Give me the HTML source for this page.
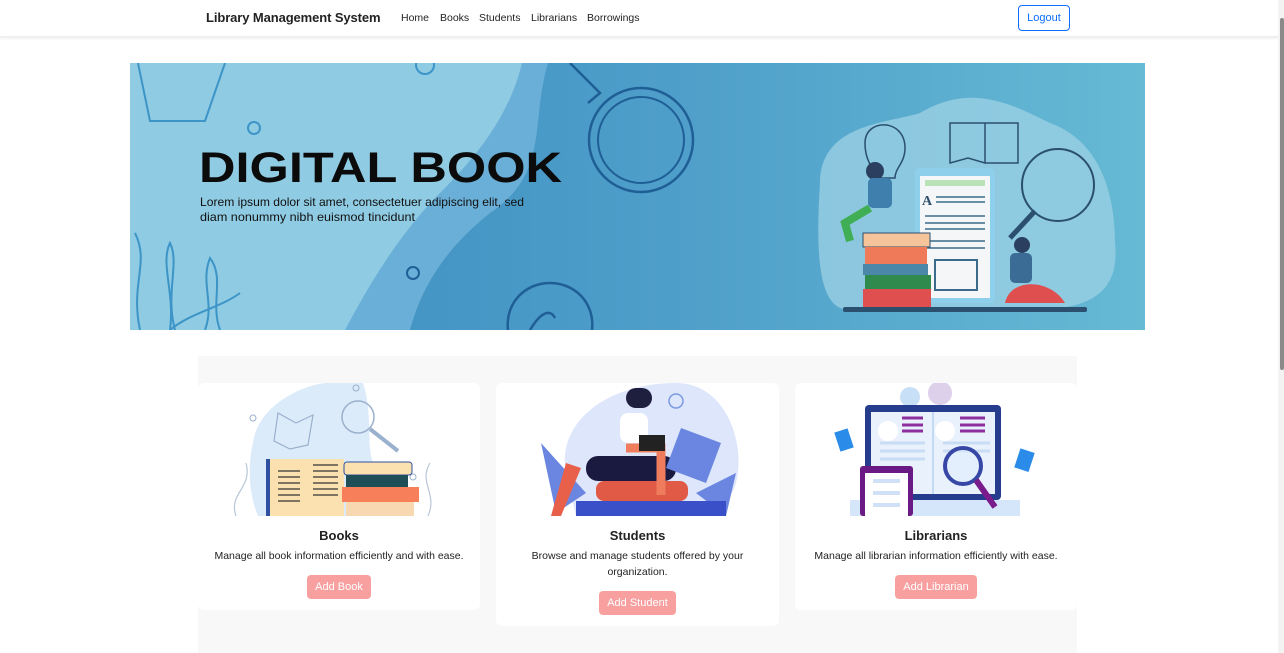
<!DOCTYPE html>
<html><head><meta charset="utf-8"><style>
*{box-sizing:border-box;margin:0;padding:0}
html,body{width:1284px;height:653px;overflow:hidden;background:#fff;font-family:"Liberation Sans",sans-serif;color:#212529}
.nav{position:absolute;left:0;top:0;width:1278px;height:37px;background:#fff;box-shadow:0 1px 3px rgba(0,0,0,.1);border-bottom:1px solid #eee}
.brand{position:absolute;left:206px;top:10px;font-size:13px;font-weight:bold;color:#222;letter-spacing:-.1px}
.links{position:absolute;left:401px;top:12px;font-size:10.5px;color:#222}
.links span{position:absolute;white-space:nowrap}
.logout{position:absolute;left:1018px;top:5px;width:52px;height:26px;border:1px solid #0d6efd;border-radius:4px;color:#0d6efd;font-size:11px;text-align:center;line-height:24px}
.sb{position:absolute;left:1278px;top:0;width:6px;height:653px;background:#f3f3f3}
.thumb{position:absolute;left:1280px;top:18px;width:4px;height:352px;background:#8a8a8a;border-radius:2px}
.banner{position:absolute;left:130px;top:63px;width:1015px;height:267px;overflow:hidden}
.sec{position:absolute;left:198px;top:356px;width:879px;height:297px;background:#f8f8f8}
.card{position:absolute;top:383px;background:#fff;border-radius:6px;text-align:center}
.card svg{display:block}
.card h5{font-size:13px;font-weight:bold;margin-top:12px;color:#222}
.card p{font-size:10.5px;line-height:16px;margin-top:5px;color:#222;padding:0 30px}
.btn{display:inline-block;margin-top:11px;height:24px;line-height:24px;padding:0 8px;background:#f8a0a0;color:#fff;font-size:11px;border-radius:4px}
</style></head><body>
<div class="nav"><div class="brand">Library Management System</div>
<div class="links"><span style="left:0">Home</span><span style="left:39px">Books</span><span style="left:78px">Students</span><span style="left:130px">Librarians</span><span style="left:186px">Borrowings</span></div>
<div class="logout">Logout</div></div>
<div class="sb"></div><div class="thumb"></div>

<div class="banner"><svg width="1015" height="267" viewBox="0 0 1015 267">
<defs><linearGradient id="g" x1="0" x2="1"><stop offset="0" stop-color="#3a8bbf"/><stop offset=".55" stop-color="#4f9fca"/><stop offset="1" stop-color="#66bad4"/></linearGradient></defs>
<rect width="1015" height="267" fill="url(#g)"/>
<path d="M0 0H418C400 60 420 110 360 150 310 190 290 230 280 267H0Z" fill="#6aafd7"/>
<path d="M0 0H392C380 50 350 90 310 130 270 170 240 220 215 267H0Z" fill="#8fcbe3"/>
<path d="M8 0 20 58H75L95 0" fill="none" stroke="#3d95c7" stroke-width="2"/>
<circle cx="124" cy="65" r="6" fill="none" stroke="#3d95c7" stroke-width="2"/>
<circle cx="295" cy="2" r="9" fill="none" stroke="#3d95c7" stroke-width="2"/>
<path d="M10 267C0 220 20 200 5 170M40 267C45 230 30 200 40 180 50 200 35 230 45 267M75 267C85 240 70 220 80 195 95 215 80 240 90 267M40 267C60 250 90 245 110 230" fill="none" stroke="#3d95c7" stroke-width="2"/>
<circle cx="511" cy="77" r="52" fill="none" stroke="#1f5f95" stroke-width="2.5"/>
<circle cx="511" cy="77" r="43" fill="none" stroke="#1f5f95" stroke-width="2"/>
<path d="M440 0 470 30 458 40" fill="none" stroke="#1f5f95" stroke-width="2.5"/>
<circle cx="283" cy="210" r="6" fill="none" stroke="#1f5f95" stroke-width="2"/>
<path d="M378 267C375 240 395 220 420 220 445 220 465 240 462 267M400 267C410 250 420 245 425 255 430 267M380 210 390 225M415 180V195M450 188 440 203M465 225 478 220M360 235 372 240" fill="none" stroke="#1f5f95" stroke-width="2.5"/>
<text x="69" y="119" font-family="Liberation Sans" font-weight="bold" font-size="43" fill="#0b0b0b" textLength="363" lengthAdjust="spacingAndGlyphs">DIGITAL BOOK</text>
<text x="70" y="143" font-family="Liberation Sans" font-size="12" fill="#111" textLength="324" lengthAdjust="spacingAndGlyphs">Lorem ipsum dolor sit amet, consectetuer adipiscing elit, sed</text>
<text x="70" y="158" font-family="Liberation Sans" font-size="12" fill="#111" textLength="215" lengthAdjust="spacingAndGlyphs">diam nonummy nibh euismod tincidunt</text>
<path d="M690 120C690 60 760 60 790 50 840 20 880 40 920 60 975 80 985 140 985 180 990 230 960 247 900 247H720C690 247 685 200 690 120Z" fill="#9ed2e4" opacity=".75"/>
<path d="M735 80C735 55 775 55 775 85 775 100 765 105 765 115H745C745 105 735 100 735 80Z" fill="none" stroke="#2b4f6f" stroke-width="1.5"/>
<path d="M820 60H855V100L838 95 820 100ZM855 60H888V100L855 100" fill="none" stroke="#2b4f6f" stroke-width="1.5"/>
<circle cx="928" cy="122" r="36" fill="none" stroke="#2b4f6f" stroke-width="2"/>
<path d="M905 148 880 175" stroke="#2b4f6f" stroke-width="5"/>
<rect x="785" y="105" width="80" height="135" rx="6" fill="#8ed0ec"/>
<rect x="790" y="113" width="70" height="122" fill="#f4f6f7"/>
<rect x="795" y="117" width="60" height="6" fill="#b9e2b6"/>
<text x="792" y="142" font-family="Liberation Serif" font-weight="bold" font-size="14" fill="#2b4f6f">A</text>
<path d="M806 134H855M806 139H855M795 153H855M795 160H855M795 166H855M795 178H855M795 185H855" stroke="#3b6a8a" stroke-width="1.5"/>
<rect x="805" y="197" width="42" height="30" fill="none" stroke="#3b6a8a" stroke-width="2"/>
<rect x="733" y="170" width="67" height="14" fill="#f6c49a" stroke="#2b4f6f"/>
<rect x="735" y="184" width="62" height="17" fill="#ef7a5a"/>
<rect x="733" y="201" width="65" height="11" fill="#4a87a8"/>
<rect x="735" y="212" width="66" height="14" fill="#2f8a4e"/>
<rect x="733" y="226" width="68" height="18" fill="#e04f4f"/>
<rect x="713" y="244" width="244" height="5" rx="2" fill="#2b4f6f"/>
<circle cx="745" cy="108" r="9" fill="#2b3f60"/><rect x="738" y="115" width="24" height="30" rx="5" fill="#3f7fae"/>
<path d="M740 145 715 160 720 178" fill="none" stroke="#3fae55" stroke-width="8"/>
<circle cx="892" cy="182" r="8" fill="#2b3f60"/><rect x="880" y="190" width="22" height="30" rx="5" fill="#3a6c95"/>
<path d="M875 240C880 215 920 215 935 240Z" fill="#e04f4f"/>
</svg></div>

<div class="sec"></div>

<div class="card" style="left:198px;width:282px;height:227px">
<svg width="282" height="133" viewBox="0 0 282 133">
<path d="M55 60C60 20 110 0 130 0H165C175 30 168 60 175 80 180 100 200 133 200 133H60C50 110 50 80 55 60Z" fill="#dcebfa"/>
<circle cx="160" cy="34" r="16" fill="none" stroke="#9ab0cc" stroke-width="1.5"/><path d="M172 46 200 68" stroke="#9ab0cc" stroke-width="4"/>
<path d="M80 30 98 40 115 32 110 62 92 66 76 58Z" fill="none" stroke="#9ab0cc" stroke-width="1.2"/>
<circle cx="55" cy="35" r="3" fill="none" stroke="#9ab0cc"/><circle cx="158" cy="5" r="3" fill="none" stroke="#9ab0cc"/><circle cx="215" cy="94" r="3" fill="none" stroke="#9ab0cc"/>
<path d="M38 133C30 110 55 105 48 80M230 133C240 110 220 100 232 80" fill="none" stroke="#b8c6d8" stroke-width="1.2"/>
<rect x="68" y="76" width="78" height="57" fill="#fbe0b0"/><rect x="68" y="76" width="4" height="57" fill="#2f4fa0"/>
<path d="M80 88H102M80 94H102M80 100H102M80 106H102M80 112H102M80 118H102M115 82H140M115 88H140M115 94H140M115 100H140M115 106H140M115 112H140" stroke="#333" stroke-width="1.2"/>
<rect x="146" y="79" width="68" height="13" rx="3" fill="#fbe0b0" stroke="#2f4fa0"/>
<rect x="148" y="92" width="62" height="12" fill="#1e4f58"/>
<rect x="144" y="104" width="77" height="15" fill="#f7805a"/>
<rect x="148" y="119" width="68" height="14" fill="#f8d8b0"/>
</svg>
<h5>Books</h5><p style="padding:0 6px">Manage all book information efficiently and with ease.</p><span class="btn">Add Book</span></div>

<div class="card" style="left:496px;width:283px;height:243px">
<svg width="283" height="133" viewBox="0 0 283 133">
<path d="M70 90C60 40 110 0 180 0 230 0 250 60 240 100 230 133 200 133 180 133H80Z" fill="#dde6fb"/>
<path d="M45 60 90 110 60 130ZM200 110 240 90 230 133Z" fill="#6b86e0"/>
<rect x="130" y="5" width="26" height="20" rx="10" fill="#1e1e3f"/><rect x="124" y="30" width="28" height="30" rx="8" fill="#fff"/>
<rect x="90" y="73" width="90" height="25" rx="12" fill="#1a1a40"/>
<rect x="100" y="98" width="92" height="20" rx="8" fill="#e05a46"/>
<rect x="80" y="118" width="150" height="15" fill="#3a50c8"/>
<path d="M130 65H165L165 112" fill="none" stroke="#ef7d5d" stroke-width="9"/>
<rect x="143" y="52" width="26" height="16" fill="#222"/>
<path d="M70 80 85 85 65 133H55Z" fill="#e8604a"/>
<path d="M185 45 225 60 210 100 170 85Z" fill="#6b86e0"/>
<circle cx="180" cy="18" r="7" fill="none" stroke="#7b9be0" stroke-width="1.5"/>
</svg>
<h5>Students</h5><p>Browse and manage students offered by your organization.</p><span class="btn">Add Student</span></div>

<div class="card" style="left:795px;width:282px;height:227px">
<svg width="282" height="133" viewBox="0 0 282 133">
<circle cx="145" cy="10" r="12" fill="#ddd0ea"/><circle cx="115" cy="14" r="10" fill="#c8e0f7"/>
<rect x="70" y="22" width="136" height="95" rx="4" fill="#263c8c"/>
<rect x="76" y="29" width="124" height="82" fill="#e9f1fc"/><path d="M138 29V111" stroke="#9cc3ec"/>
<circle cx="93" cy="48" r="10" fill="#fff"/><circle cx="150" cy="48" r="10" fill="#fff"/>
<path d="M107 35H128M107 42H128M107 48H128M165 35H190M165 42H190M165 48H190" stroke="#8e2fa0" stroke-width="3"/>
<path d="M85 60H130M85 68H130M85 76H130M148 60H195M148 68H195" stroke="#c8dcf5" stroke-width="3"/>
<rect x="55" y="117" width="170" height="16" fill="#d5e6fb"/>
<rect x="65" y="83" width="53" height="50" rx="3" fill="#6a1a85"/><rect x="70" y="90" width="43" height="43" fill="#fff"/>
<path d="M78 98H105M78 110H105M78 122H105" stroke="#cfe0f7" stroke-width="4"/>
<circle cx="168" cy="83" r="18" fill="#dfeefc" fill-opacity=".6" stroke="#3747a6" stroke-width="4"/>
<path d="M181 97 200 124" stroke="#7a1c8c" stroke-width="6"/>
<rect x="42" y="47" width="14" height="20" fill="#2a8be8" transform="rotate(-18 49 57)"/>
<rect x="222" y="67" width="15" height="20" fill="#2a8be8" transform="rotate(18 229 77)"/>
</svg>
<h5>Librarians</h5><p style="padding:0 6px">Manage all librarian information efficiently with ease.</p><span class="btn">Add Librarian</span></div>
</body></html>
